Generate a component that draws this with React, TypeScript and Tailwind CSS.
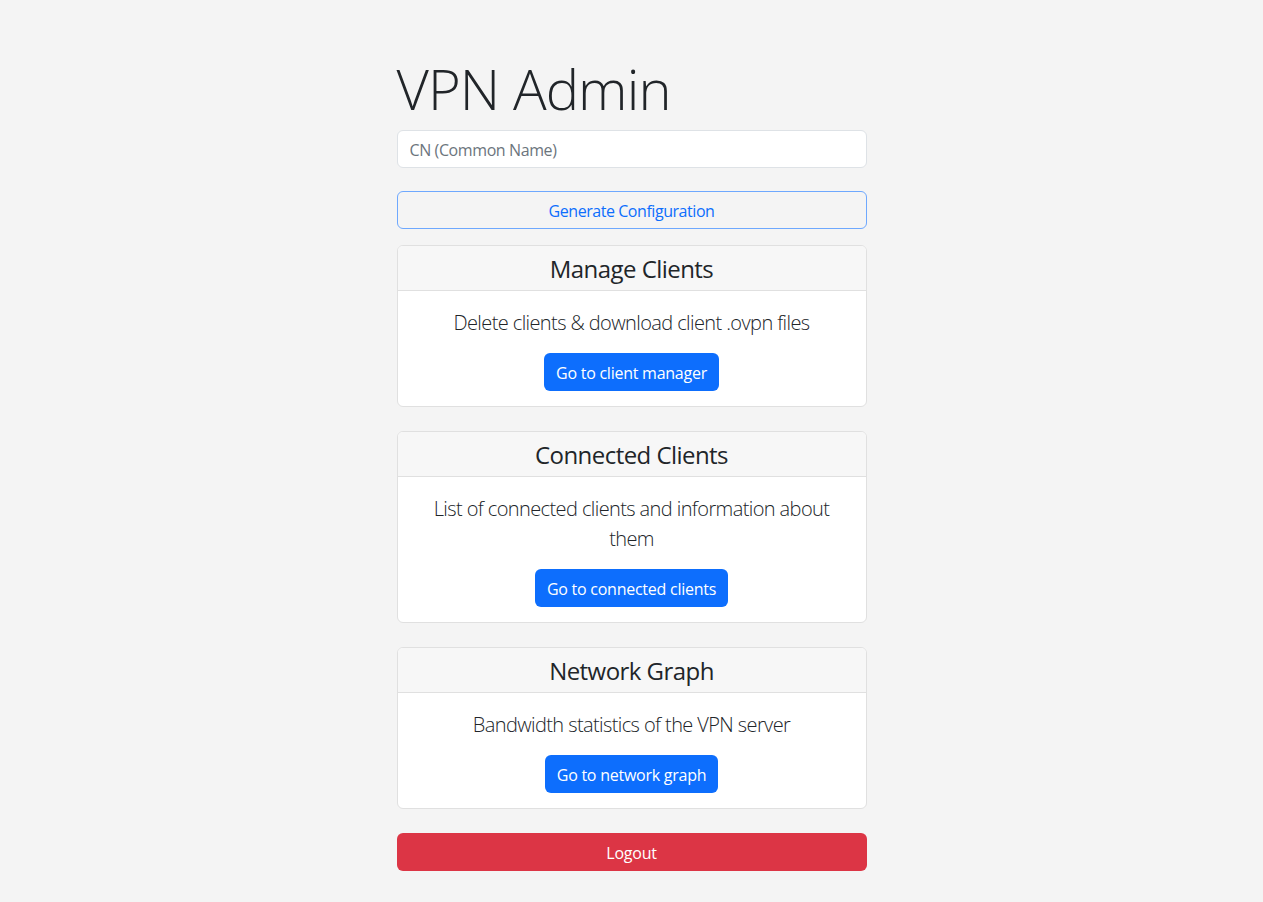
import React from 'react';

const font = { fontFamily: '"Open Sans", "Noto Sans", sans-serif' };

type Section = {
  title: string;
  text: string;
  action: string;
};

const sections: Section[] = [
  {
    title: 'Manage Clients',
    text: 'Delete clients & download client .ovpn files',
    action: 'Go to client manager',
  },
  {
    title: 'Connected Clients',
    text: 'List of connected clients and information about them',
    action: 'Go to connected clients',
  },
  {
    title: 'Network Graph',
    text: 'Bandwidth statistics of the VPN server',
    action: 'Go to network graph',
  },
];

const Card = ({ title, text, action }: Section) => {
  return (
    <div className="mb-6 rounded-[6px] border border-[#e0e0e0] bg-white text-center">
      <div className="border-b border-[#e0e0e0] bg-[#f7f7f7] px-4 pt-[9px] pb-[7px] rounded-t-[5px]">
        <h4 className="text-[24px] leading-[28px] font-normal tracking-[-0.55px] text-[#212529]">{title}</h4>
      </div>
      <div className="px-4 pt-[17px] pb-[15px]">
        <p className="mb-[15px] text-[20px] leading-[30px] font-light tracking-[-0.6px] text-[#212529]">{text}</p>
        <button
          type="button"
          className="h-[38px] rounded-[6px] bg-[#0d6efd] px-3 pt-px text-[16px] tracking-[-0.25px] text-white"
        >
          {action}
        </button>
      </div>
    </div>
  );
};

const App = () => {
  return (
    <div className="min-h-[902px] bg-[#f4f4f4] text-[#212529]" style={font}>
      <div className="mx-auto w-[470px] pt-[55px] pb-8">
        <h1 className="mb-2 text-[56px] leading-[1.2] font-light tracking-[-0.9px]">VPN Admin</h1>
        <input
          type="text"
          placeholder="CN (Common Name)"
          className="mb-[23px] block h-[38px] w-full rounded-[6px] border border-[#dee2e6] bg-white px-3 pt-px text-[16px] tracking-[-0.4px] placeholder:text-[#6c757d] outline-none"
        />
        <button
          type="button"
          className="mb-4 block h-[38px] w-full rounded-[6px] border border-[#6ea8fe] bg-transparent pt-px text-[16px] tracking-[-0.45px] text-[#0d6efd]"
        >
          Generate Configuration
        </button>
        {sections.map((s) => (
          <Card key={s.title} {...s} />
        ))}
        <button
          type="button"
          className="block h-[38px] w-full rounded-[6px] bg-[#dc3545] pt-px text-[16px] tracking-[-0.25px] text-white"
        >
          Logout
        </button>
      </div>
    </div>
  );
};

export default App;
